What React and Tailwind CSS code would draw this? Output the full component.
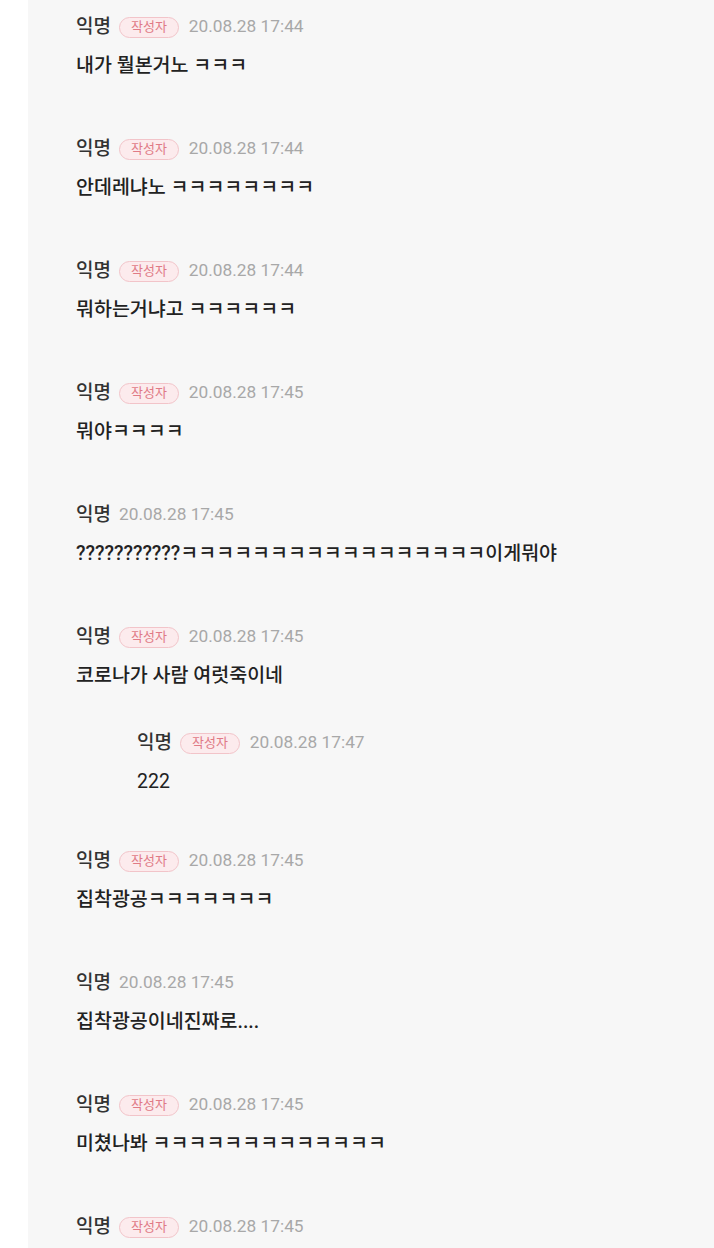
const COMMENTS = [
  { badge: true, time: '20.08.28 17:44', text: '내가 뭘본거노 ㅋㅋㅋ' },
  { badge: true, time: '20.08.28 17:44', text: '안데레냐노 ㅋㅋㅋㅋㅋㅋㅋㅋ' },
  { badge: true, time: '20.08.28 17:44', text: '뭐하는거냐고 ㅋㅋㅋㅋㅋㅋ' },
  { badge: true, time: '20.08.28 17:45', text: '뭐야ㅋㅋㅋㅋ' },
  { badge: false, time: '20.08.28 17:45', text: '???????????ㅋㅋㅋㅋㅋㅋㅋㅋㅋㅋㅋㅋㅋㅋㅋㅋㅋ이게뭐야' },
  {
    badge: true, time: '20.08.28 17:45', text: '코로나가 사람 여럿죽이네',
    replies: [{ badge: true, time: '20.08.28 17:47', text: '222' }],
  },
  { badge: true, time: '20.08.28 17:45', text: '집착광공ㅋㅋㅋㅋㅋㅋㅋ' },
  { badge: false, time: '20.08.28 17:45', text: '집착광공이네진짜로....' },
  { badge: true, time: '20.08.28 17:45', text: '미쳤나봐 ㅋㅋㅋㅋㅋㅋㅋㅋㅋㅋㅋㅋㅋ' },
  { badge: true, time: '20.08.28 17:45', text: '' },
];

function Header({ badge, time }) {
  return (
    <div className="flex items-center h-6 gap-2">
      <span className="text-[19px] font-medium text-[#333]">익명</span>
      {badge && (
        <span className="mr-[2px] h-[21px] flex items-center px-[11px] rounded-full border border-[#f2c4c9] bg-[#fcebed] text-[13px] text-[#e07a86]">
          작성자
        </span>
      )}
      <span className="text-[17.3px] text-[#a8a8a8]">{time}</span>
    </div>
  );
}

function Comment({ c }) {
  const hasReplies = c.replies && c.replies.length > 0;
  return (
    <>
      <div className={`pt-[15px] ${hasReplies ? 'pb-[28px]' : 'pb-[44px]'}`}>
        <Header badge={c.badge} time={c.time} />
        <p className="mt-[15px] h-6 leading-6 text-[19.5px] font-medium text-[#222] whitespace-nowrap">{c.text}</p>
      </div>
      {hasReplies && c.replies.map((r, i) => (
        <div key={i} className="pl-[61px] pt-[15px] pb-[40px]">
          <Header badge={r.badge} time={r.time} />
          <p className="mt-[15px] h-6 leading-6 text-[19.5px] text-[#222]">{r.text}</p>
        </div>
      ))}
    </>
  );
}

export default function App() {
  return (
    <div
      className="flex h-[1248px] overflow-hidden bg-white"
      style={{ fontFamily: 'Roboto, "Noto Sans CJK KR", sans-serif' }}
    >
      <div className="w-[28px] shrink-0 bg-white" />
      <div className="flex-1 bg-[#f7f7f7] pl-[48px]">
        {COMMENTS.map((c, i) => (
          <Comment key={i} c={c} />
        ))}
      </div>
    </div>
  );
}
